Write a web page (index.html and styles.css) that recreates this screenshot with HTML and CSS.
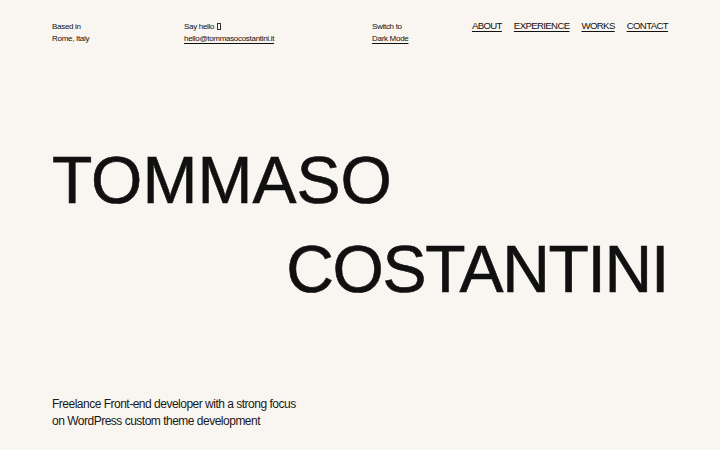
FILE: index.html
```html
<!DOCTYPE html>
<html lang="en">
<head>
<meta charset="utf-8">
<title>Tommaso Costantini</title>
<link rel="stylesheet" href="styles.css">
</head>
<body>
<div class="page">
  <header class="top">
    <div class="info">
      <span>Based in</span>
      <span>Rome, Italy</span>
    </div>
    <div class="info">
      <span>Say hello <span class="tofu"></span></span>
      <a href="#" class="link">hello@tommasocostantini.it</a>
    </div>
    <div class="info">
      <span>Switch to</span>
      <a href="#" class="link">Dark Mode</a>
    </div>
    <nav class="nav">
      <a href="#">ABOUT</a>
      <a href="#">EXPERIENCE</a>
      <a href="#">WORKS</a>
      <a href="#">CONTACT</a>
    </nav>
  </header>

  <h1 class="name">
    <span class="first">TOMMASO</span>
    <span class="last">COSTANTINI</span>
  </h1>

  <p class="intro">Freelance Front-end developer with a strong focus<br>on WordPress custom theme development</p>
</div>
</body>
</html>
```

FILE: styles.css
```css
* { box-sizing: border-box; }

html, body {
  margin: 0;
  padding: 0;
  background: #f9f5f0;
  color: #111010;
  font-family: "Liberation Sans", Arial, sans-serif;
}

.page {
  height: 450px;
  padding: 21px 52px 0;
  display: flex;
  flex-direction: column;
}

.top {
  display: grid;
  grid-template-columns: 132px 188px 1fr auto;
  align-items: start;
}

.info {
  display: flex;
  flex-direction: column;
  align-items: flex-start;
  font-size: 8px;
  line-height: 12px;
  letter-spacing: -0.3px;
}

.link {
  color: inherit;
  text-decoration: underline;
  text-underline-offset: 2px;
  text-decoration-thickness: 1px;
}

.tofu {
  display: inline-block;
  width: 4px;
  height: 7px;
  border: 0.8px solid #333;
  vertical-align: -1px;
  margin-left: 1px;
}

.nav {
  display: flex;
  gap: 12px;
  margin-top: -1px;
  font-size: 9.6px;
  line-height: 12px;
  letter-spacing: -0.62px;
}

.nav a {
  color: inherit;
  text-decoration: underline;
  text-underline-offset: 2px;
  text-decoration-thickness: 1px;
}

.name {
  margin: 91px 0 0;
  font-weight: 400;
  font-size: 66px;
  line-height: 89px;
  -webkit-text-stroke: 0.6px #111010;
  display: flex;
  flex-direction: column;
}

.first {
  align-self: flex-start;
  letter-spacing: 0;
}

.last {
  align-self: flex-end;
  letter-spacing: -1.3px;
}

.intro {
  margin: 82px 0 0;
  font-size: 12px;
  line-height: 17px;
  letter-spacing: -0.5px;
  color: #1a1818;
}
```
